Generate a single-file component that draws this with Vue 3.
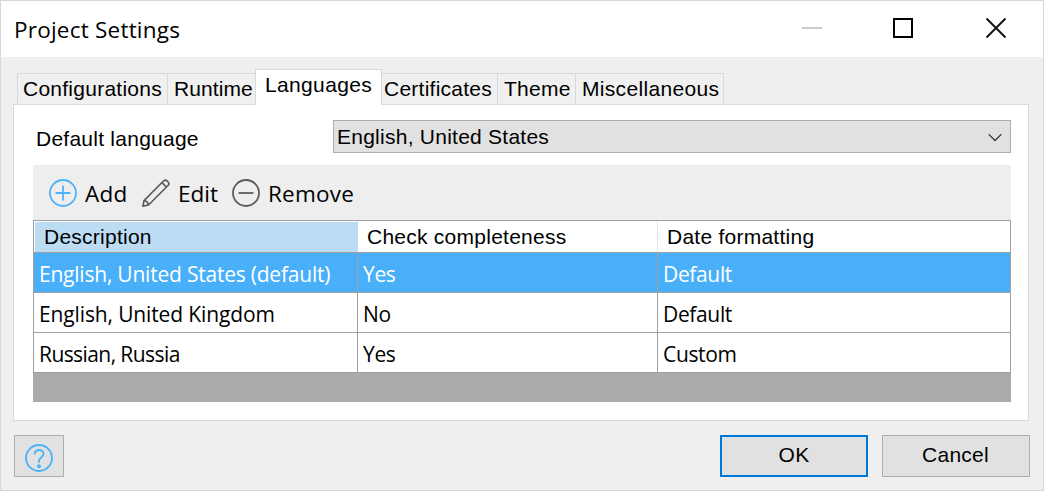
<script setup>
import { ref } from 'vue'

const tabs = [
  { id: 'configurations', label: 'Configurations' },
  { id: 'runtime', label: 'Runtime' },
  { id: 'languages', label: 'Languages' },
  { id: 'certificates', label: 'Certificates' },
  { id: 'theme', label: 'Theme' },
  { id: 'misc', label: 'Miscellaneous' },
]
const activeTab = ref('languages')

const rows = [
  { id: 'en-us', cells: ['English, United States (default)', 'Yes', 'Default'] },
  { id: 'en-gb', cells: ['English, United Kingdom', 'No', 'Default'] },
  { id: 'ru', cells: ['Russian, Russia', 'Yes', 'Custom'] },
]
const selected = ref('en-us')
</script>

<template>
  <div class="window">
    <header class="titlebar">
      <h1 class="title">Project Settings</h1>
      <div class="controls">
        <svg class="ctl" viewBox="0 0 22 22"><rect x="3" y="10" width="20" height="2" fill="#ccc" /></svg>
        <svg class="ctl" viewBox="0 0 22 22"><rect x="2" y="2" width="18" height="18" fill="none" stroke="#000" stroke-width="2" /></svg>
        <svg class="ctl" viewBox="0 0 22 22"><path d="M1.5 1.5 20.5 20.5M20.5 1.5 1.5 20.5" fill="none" stroke="#111" stroke-width="1.9" /></svg>
      </div>
    </header>

    <nav class="tabs">
      <button
        v-for="tab in tabs"
        :key="tab.id"
        :class="['tab', tab.id, { active: tab.id === activeTab }]"
        @click="activeTab = tab.id"
      >{{ tab.label }}</button>
    </nav>

    <main class="panel">
      <div class="field">
        <span class="field-label">Default language</span>
        <div class="select">
          <span>English, United States</span>
          <svg class="chevron" viewBox="0 0 14 9"><path d="M.7 1.2 7 7.5 13.3 1.2" fill="none" stroke="#404040" stroke-width="1.3" /></svg>
        </div>
      </div>

      <div class="toolbar">
        <button class="tool add">
          <svg class="icon" viewBox="0 0 28 28" fill="none" stroke="#4db3f8" stroke-width="1.8">
            <circle cx="14" cy="14" r="13" />
            <path d="M14 6.5v15M6.5 14h15" />
          </svg>
          <span>Add</span>
        </button>
        <button class="tool edit">
          <svg class="icon" viewBox="0 0 28 28" fill="none" stroke="#5c5c5c" stroke-width="1.7" stroke-linejoin="round">
            <path d="M.9 27.1 2 21.6 21.5 2Q23.3.2 25 1.9L26.1 3Q27.8 4.700 26 6.500L6.500 26ZM2 21.600Q5.800 22 6.500 26M20 3.600 24.400 8" />
          </svg>
          <span>Edit</span>
        </button>
        <button class="tool remove">
          <svg class="icon" viewBox="0 0 28 28" fill="none" stroke="#5c5c5c" stroke-width="1.8">
            <circle cx="14" cy="14" r="13" />
            <path d="M6.5 14h15" />
          </svg>
          <span>Remove</span>
        </button>
      </div>

      <div class="grid">
        <div class="row head">
          <div class="cell sorted"><span class="head-text">Description</span></div>
          <div class="cell"><span class="head-text">Check completeness</span></div>
          <div class="cell"><span class="head-text">Date formatting</span></div>
        </div>
        <div
          v-for="row in rows"
          :key="row.id"
          :class="['row', 'body', row.id, { selected: row.id === selected }]"
          @click="selected = row.id"
        >
          <div v-for="(text, j) in row.cells" :key="j" class="cell"><span>{{ text }}</span></div>
        </div>
      </div>
    </main>

    <footer class="footer">
      <button class="btn help" aria-label="Help">
        <svg class="icon" viewBox="0 0 28 28" fill="none" stroke="#4db3f8" stroke-width="1.9">
          <circle cx="14" cy="14" r="13" />
          <path d="M9.6 10.500C9.600 4.600 18.600 4.500 18.600 10C18.600 13.400 14 13.200 14 17V18.800" />
          <circle cx="14" cy="22.200" r="2" fill="#4db3f8" stroke="none" />
        </svg>
      </button>
      <button class="btn ok">OK</button>
      <button class="btn cancel">Cancel</button>
    </footer>
  </div>
</template>

<style>
body {
  margin: 0;
  overflow: hidden;
}
</style>

<style scoped>
.window {
  box-sizing: border-box;
  width: 1044px;
  height: 491px;
  display: flex;
  flex-direction: column;
  border: 1px solid #d7d7d7;
  background: #efefef;
  color: #000;
  font: 21px/24px "Liberation Sans", Arial, sans-serif;
  letter-spacing: 0.25px;
  white-space: nowrap;
}
button {
  margin: 0;
  padding: 0;
  border: 0;
  border-radius: 0;
  background: none;
  color: inherit;
  font: inherit;
  letter-spacing: inherit;
}
svg {
  display: block;
  flex: none;
}

.titlebar {
  height: 56px;
  flex: none;
  display: flex;
  align-items: center;
  justify-content: space-between;
  padding: 0 36px 0 13px;
  background: #fff;
}
.title {
  margin: 2px 0 0;
  font: 400 22.5px/32px "Open Sans", "Segoe UI", sans-serif;
  letter-spacing: 0.22px;
}
.controls {
  display: flex;
  gap: 71px;
  margin-top: -2px;
}
.ctl {
  width: 22px;
  height: 22px;
  overflow: visible;
}

.tabs {
  height: 37px;
  flex: none;
  display: flex;
  align-items: flex-end;
  padding: 11px 0 0 16px;
  margin-bottom: -1px;
  position: relative;
}
.tab {
  box-sizing: border-box;
  height: 32px;
  padding: 3px 0 0 5px;
  border: 1px solid #d9d9d9;
  border-right: 0;
  background: #f0f0f0;
  text-align: left;
  line-height: 24px;
  display: flex;
}
.configurations { width: 150px; }
.runtime { width: 88px; padding-left: 6px; letter-spacing: 0.1px; }
.languages { width: 127px; padding-left: 9px; letter-spacing: 0.35px; }
.certificates { width: 115px; padding-left: 2px; border-left: 0; }
.theme { width: 78px; padding-left: 6px; }
.misc { width: 149px; padding-left: 6px; border-right: 1px solid #d9d9d9; letter-spacing: 0.32px; }
.tab.active {
  height: 36px;
  border-right: 1px solid #d9d9d9;
  border-bottom: 0;
  background: #fff;
}

.panel {
  box-sizing: border-box;
  width: 1016px;
  height: 317px;
  flex: none;
  margin-left: 12px;
  padding: 15px 17px 17px 19px;
  border: 1px solid #d9d9d9;
  background: #fff;
}
.field {
  display: flex;
  justify-content: space-between;
}
.field-label {
  padding: 7px 0 0 3px;
}
.select {
  box-sizing: border-box;
  width: 678px;
  height: 33px;
  display: flex;
  align-items: center;
  justify-content: space-between;
  padding: 0 8px 0 3px;
  border: 1px solid #adadad;
  background: #e1e1e1;
}
.chevron {
  width: 14px;
  height: 9px;
  margin-top: 2px;
}

.toolbar {
  box-sizing: border-box;
  height: 55px;
  display: flex;
  align-items: center;
  margin-top: 12px;
  padding-left: 16px;
  background: #eee;
  font: 22.5px/32px "Open Sans", "Segoe UI", sans-serif;
  letter-spacing: 0.2px;
}
.tool {
  display: flex;
  align-items: center;
}
.icon {
  width: 28px;
  height: 28px;
}
.tool span {
  margin-top: 3px;
}
.add { width: 93px; gap: 8px; }
.edit { width: 90px; gap: 8px; letter-spacing: 0; }
.remove { gap: 8px; }

.grid {
  box-sizing: border-box;
  height: 182px;
  border-top: 1px solid #a0a0a0;
  background: #ababab;
}
.row {
  box-sizing: border-box;
  display: grid;
  grid-template-columns: 324px 300px 353px;
  border-left: 1px solid #a0a0a0;
  border-bottom: 1px solid #a0a0a0;
  background: #fff;
}
.cell {
  box-sizing: border-box;
  display: flex;
  align-items: center;
  border-right: 1px solid #a0a0a0;
}
.head {
  height: 32px;
}
.head .cell {
  padding-left: 9px;
  border-right-color: #e5e5e5;
}
.head .sorted {
  margin: 1px 0 0 1px;
  background: #bcdcf4;
  border-right-color: #bcdcf4;
}
.head .cell:last-child {
  border-right-color: #a0a0a0;
}
.head .sorted .head-text {
  margin-top: -1px;
}
.body {
  height: 40px;
  font: 21px/30px "Open Sans", "Segoe UI", sans-serif;
  letter-spacing: -0.35px;
}
.body .cell {
  padding: 2px 0 0 5px;
}
.en-us .cell:first-child { letter-spacing: -0.22px; }
.en-gb .cell:first-child { letter-spacing: -0.13px; }
.ru .cell:first-child { letter-spacing: -0.58px; }
.selected {
  background: #48aff8;
  color: #fff;
}

.footer {
  display: flex;
  padding: 14px 13px 0 13px;
}
.btn {
  box-sizing: border-box;
  width: 148px;
  height: 42px;
  display: flex;
  align-items: center;
  justify-content: center;
  padding-bottom: 2px;
  border: 1px solid #adadad;
  background: #e1e1e1;
}
.help {
  width: 50px;
  padding: 4px 0 0;
  margin-right: auto;
}
.ok {
  margin-right: 14px;
  border: 2px solid #0078d7;
}
.cancel {
  padding-right: 1px;
}
</style>
